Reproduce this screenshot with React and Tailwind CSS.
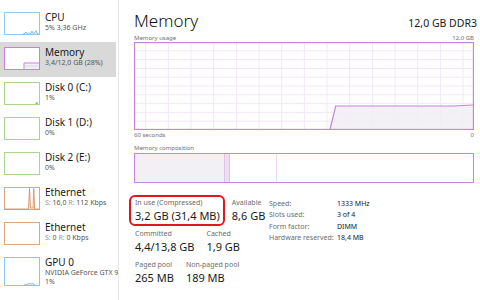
import React from "react";

const PURPLE = "#c584dc";

const Thumb = ({ color, h = 23, children }) => (
  <svg width="36" height={h} className="shrink-0 block">
    <rect x="0.5" y="0.5" width="35" height={h - 1} fill="white" stroke={color} />
    {children}
  </svg>
);

const SideItem = ({ title, lines, thumb, selected }) => (
  <div
    className={`flex h-[35px] w-[116px] pl-[4px] pt-[5px] ${selected ? "bg-[#d9d9d9]" : ""}`}
  >
    {thumb}
    <div className="ml-[5px] -mt-[1px] min-w-0 whitespace-nowrap">
      <div className="text-[10px] leading-[12px] text-[#1a1a1a]">{title}</div>
      {lines.map((l, i) => (
        <div key={i} className="text-[7px] leading-[9px] text-[#555]">
          {l}
        </div>
      ))}
    </div>
  </div>
);

const SR = ({ s, r }) => (
  <span>
    <span className="text-[#999]">S: </span>
    {s} <span className="text-[#999]">R: </span>
    {r}
  </span>
);

function UsageChart() {
  const cols = [];
  for (let x = 11.7; x < 340; x += 22.67) cols.push(x);
  const rows = [];
  for (let y = 8.8; y < 88; y += 8.8) rows.push(y);
  return (
    <svg width="340" height="88" className="block">
      {cols.map((x) => (
        <line key={"c" + x} x1={x} y1="0" x2={x} y2="88" stroke="#f3e7f6" />
      ))}
      {rows.map((y) => (
        <line key={"r" + y} x1="0" y1={y} x2="340" y2={y} stroke="#f3e7f6" />
      ))}
      <polygon
        points="196,88 201.7,64 319,64 339,63 339,88"
        fill="#f1eef3"
        fillOpacity="0.85"
      />
      <polyline
        points="196,87.5 201.7,64 319,64 339,63"
        fill="none"
        stroke={PURPLE}
        strokeWidth="1.2"
      />
      <rect x="0.5" y="0.5" width="339" height="87" fill="none" stroke={PURPLE} strokeWidth="1.3" />
    </svg>
  );
}

const Stat = ({ label, value }) => (
  <div className="whitespace-nowrap">
    <div className="text-[7px] leading-[10px] text-[#6d6d6d]">{label}</div>
    <div className="mt-[1px] text-[11px] leading-[14px] text-[#1a1a1a]">{value}</div>
  </div>
);

export default function App() {
  return (
    <div
      className="w-[480px] h-[300px] flex bg-white overflow-hidden"
      style={{ fontFamily: '"Noto Sans", "Open Sans", sans-serif' }}
    >
      <div className="w-[118px] shrink-0 pt-[7px] overflow-hidden">
        <SideItem
          title="CPU"
          lines={["5% 3,36 GHz"]}
          thumb={
            <Thumb color="#94c8ec">
              <polyline
                points="19,22 21,21.5 22,20 23,21.5 25,21 27,21.5 28,19 29,21.5 31,20.5 32,18.5 33,21.5 35,22"
                fill="#e6f2fb"
                stroke="#6fb2e2"
                strokeWidth="0.8"
              />
            </Thumb>
          }
        />
        <SideItem
          selected
          title="Memory"
          lines={["3,4/12,0 GB (28%)"]}
          thumb={
            <Thumb color={PURPLE}>
              <rect x="20" y="16" width="15" height="6" fill="#f4f1f6" />
              <polyline points="20,22 20,16 35,16" fill="none" stroke={PURPLE} />
              <line x1="21" y1="19" x2="35" y2="19" stroke="#ddd4e2" />
            </Thumb>
          }
        />
        <SideItem
          title="Disk 0 (C:)"
          lines={["1%"]}
          thumb={
            <Thumb color="#aad58e">
              <polygon points="31,22 33,19.5 34,22" fill="#8cc36a" />
            </Thumb>
          }
        />
        <SideItem title="Disk 1 (D:)" lines={["0%"]} thumb={<Thumb color="#aad58e" />} />
        <SideItem title="Disk 2 (E:)" lines={["0%"]} thumb={<Thumb color="#aad58e" />} />
        <SideItem
          title="Ethernet"
          lines={[<SR key="a" s="16,0" r="112 Kbps" />]}
          thumb={
            <Thumb color="#dba77f">
              <polyline
                points="1,22 24.5,22 25.5,1.5 26.5,21 29,21 29.8,1.5 30.6,22 35,22"
                fill="#f7e8dc"
                stroke="#d48a55"
                strokeWidth="0.8"
              />
            </Thumb>
          }
        />
        <SideItem
          title="Ethernet"
          lines={[<SR key="b" s="0" r="0 Kbps" />]}
          thumb={<Thumb color="#dba77f" />}
        />
        <SideItem
          title="GPU 0"
          lines={["NVIDIA GeForce GTX 960", "1%"]}
          thumb={
            <Thumb color="#92c3e8" h={29}>
              <polyline
                points="20,28 23,27.5 25,26.5 27,27 29,26.5 31,28"
                fill="#e6f2fb"
                stroke="#6fb2e2"
                strokeWidth="0.8"
              />
            </Thumb>
          }
        />
      </div>

      <div className="flex-1 border-l border-[#e8e8e8] pl-[15px] pr-[4px]">
        <div className="flex items-baseline justify-between w-[343px] pt-[10px]">
          <div className="text-[17px] leading-[22px] font-light text-[#111]">Memory</div>
          <div className="text-[10.5px] text-[#1a1a1a]">12,0 GB DDR3</div>
        </div>
        <div className="mt-[2px] flex justify-between w-[340px] h-[8px] text-[6px] leading-[8px] text-[#707070]">
          <span>Memory usage</span>
          <span>12,0 GB</span>
        </div>
        <UsageChart />
        <div className="mt-[1px] flex justify-between w-[340px] text-[6px] leading-[8px] text-[#707070]">
          <span>60 seconds</span>
          <span>0</span>
        </div>
        <div className="mt-[5px] text-[6px] leading-[8px] text-[#707070]">Memory composition</div>
        <div className="mt-[1px] w-[340px] h-[30px] flex border border-[#c584dc]">
          <div className="w-[89px] bg-[#f2f0f4]" />
          <div className="w-[6px] bg-[#ecdff0] border-x border-[#dcc3e6]" />
          <div className="w-[47px] border-r border-[#ead9ef]" />
          <div className="flex-1" />
        </div>

        <div className="relative mt-[15px] flex items-start">
          <div className="absolute left-[-5px] top-[-3px] w-[96px] h-[31px] rounded-[6px] border-2 border-[#e3161f]" />
          <div className="w-[135px] pl-[1px] flex flex-col gap-[6px]">
            <div className="flex gap-[12px]">
              <Stat label="In use (Compressed)" value="3,2 GB (31,4 MB)" />
              <Stat label="Available" value="8,6 GB" />
            </div>
            <div className="flex gap-[12px]">
              <Stat label="Committed" value="4,4/13,8 GB" />
              <Stat label="Cached" value="1,9 GB" />
            </div>
            <div className="flex gap-[12px]">
              <Stat label="Paged pool" value="265 MB" />
              <Stat label="Non-paged pool" value="189 MB" />
            </div>
          </div>
          <div className="grid grid-cols-[68px_auto] content-start text-[7px] leading-[11.4px] whitespace-nowrap">
            <span className="text-[#6d6d6d]">Speed:</span>
            <span className="text-[#1a1a1a]">1333 MHz</span>
            <span className="text-[#6d6d6d]">Slots used:</span>
            <span className="text-[#1a1a1a]">3 of 4</span>
            <span className="text-[#6d6d6d]">Form factor:</span>
            <span className="text-[#1a1a1a]">DIMM</span>
            <span className="text-[#6d6d6d]">Hardware reserved:</span>
            <span className="text-[#1a1a1a]">18,4 MB</span>
          </div>
        </div>
      </div>
    </div>
  );
}
